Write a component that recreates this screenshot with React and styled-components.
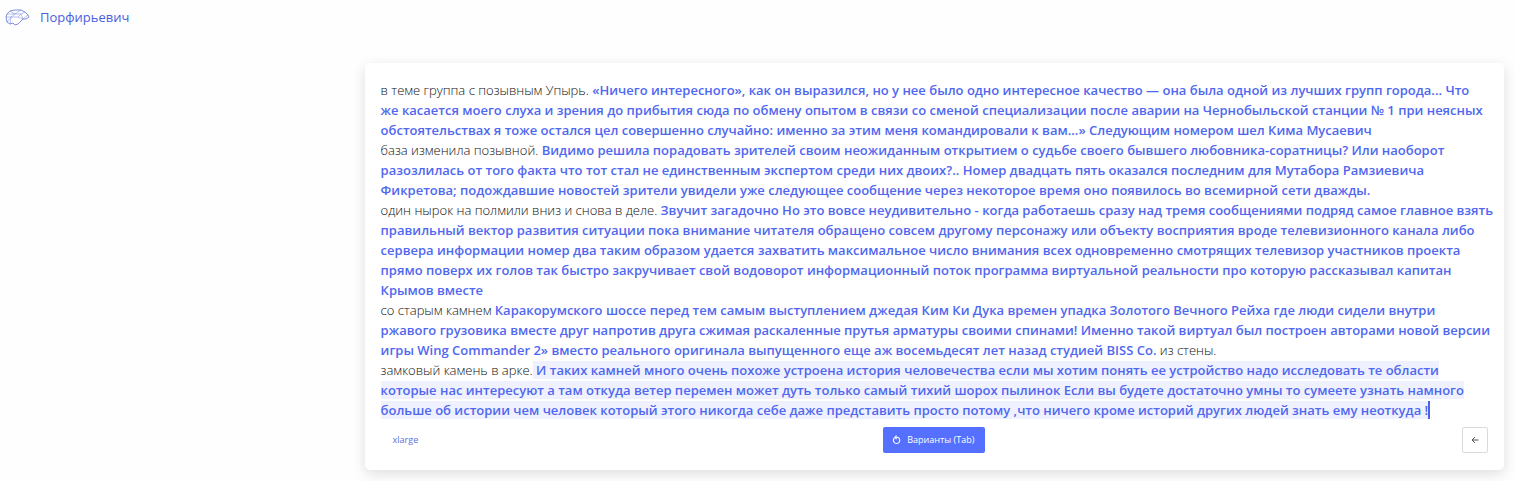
import React from 'react';
import styled, { createGlobalStyle } from 'styled-components';

const GlobalStyle = createGlobalStyle`
  * { box-sizing: border-box; }
  body {
    margin: 0;
    background: #fefefe;
    color: #111;
    font-family: "Open Sans", "Noto Sans", sans-serif;
    font-size: 13px;
    font-weight: 300;
    line-height: 20px;
  }
  button { font-family: inherit; }
`;

const Header = styled.header`
  display: flex;
  height: 63px;
  padding: 6px 5px;
  align-items: flex-start;
`;

const Brand = styled.a`
  display: flex;
  align-items: center;
  gap: 10px;
  height: 22px;
  color: #4a60e2;
  font-weight: 500;
  font-size: 13px;
  text-decoration: none;
`;

const Card = styled.main`
  margin: 0 11px 11px calc(24% + 1px);
  padding: 17px 16px;
  border-radius: 5px;
  background: #fff;
  box-shadow: 0 4px 14px rgba(0, 0, 0, 0.13);
`;

const Editor = styled.div`
  outline: none;
`;

const Paragraph = styled.p`
  margin: 0;
  white-space: nowrap;
`;

const Generated = styled.strong`
  color: #5068f0;
  font-weight: 600;
`;

const Fresh = styled(Generated)`
  background: #eff1fe;
`;

const Caret = styled.span`
  border-right: 2px solid #4a62e8;
`;

const Toolbar = styled.div`
  display: flex;
  align-items: center;
  justify-content: space-between;
  margin-top: 7px;
`;

const Side = styled.div`
  display: flex;
  flex: 1;
  justify-content: ${(p) => (p.$end ? 'flex-end' : 'flex-start')};
`;

const BaseButton = styled.button`
  display: flex;
  align-items: center;
  justify-content: center;
  height: 26px;
  padding: 0 11px;
  border: 1px solid transparent;
  border-radius: 2px;
  background: transparent;
  color: #5a70e0;
  font-size: 9px;
  line-height: 12px;
`;

const PrimaryButton = styled(BaseButton)`
  gap: 5px;
  padding: 0 10px 0 8px;
  background: #5570ff;
  color: #fff;
`;

const IconButton = styled(BaseButton)`
  width: 26px;
  padding: 0;
  border-color: #d9d9d9;
  background: #fff;
  color: #444;
`;

const BrainIcon = () => (
  <svg width="25" height="18" viewBox="0 0 25 18" fill="none" stroke="#7383d8" strokeWidth="0.9" strokeLinejoin="round" aria-hidden="true">
    <path d="M1 9 2 6 5 3 10 2 16 2 20 4 23 7 24 9 21 11 18 11 16 13 13 16 10 17 8 15 5 16 2 14Z" />
    <path d="M2 6 10 6 5 3M10 6 16 2M10 6 16 6 20 4M16 6 18 11 23 7M1 9 6 9 10 6M6 9 5 16M6 9 13 9 18 11M13 9 16 6M2 14 6 9" strokeWidth="0.5" />
  </svg>
);

const RefreshIcon = () => (
  <svg width="10" height="10" viewBox="0 0 10 10" fill="none" stroke="currentColor" strokeWidth="1.1" aria-hidden="true">
    <path d="M2.4 3A3.2 3.2 0 1 0 5.6 2.3H3" />
    <path d="M4.6.6 2.9 2.3 4.6 4" />
  </svg>
);

const BackIcon = () => (
  <svg width="8" height="8" viewBox="0 0 8 8" fill="none" stroke="currentColor" strokeWidth="0.9" aria-hidden="true">
    <path d="M7.5 4H1M4 1 1 4l3 3" />
  </svg>
);

const story = [
  {
    prompt: 'в теме группа с позывным Упырь. ',
    lines: [
      '«Ничего интересного», как он выразился, но у нее было одно интересное качество — она была одной из лучших групп города... Что',
      'же касается моего слуха и зрения до прибытия сюда по обмену опытом в связи со сменой специализации после аварии на Чернобыльской станции № 1 при неясных',
      'обстоятельствах я тоже остался цел совершенно случайно: именно за этим меня командировали к вам...» Следующим номером шел Кима Мусаевич',
    ],
  },
  {
    prompt: 'база изменила позывной. ',
    lines: [
      'Видимо решила порадовать зрителей своим неожиданным открытием о судьбе своего бывшего любовника-соратницы? Или наоборот',
      'разозлилась от того факта что тот стал не единственным экспертом среди них двоих?.. Номер двадцать пять оказался последним для Мутабора Рамзиевича',
      'Фикретова; подождавшие новостей зрители увидели уже следующее сообщение через некоторое время оно появилось во всемирной сети дважды.',
    ],
  },
  {
    prompt: 'один нырок на полмили вниз и снова в деле. ',
    lines: [
      'Звучит загадочно Но это вовсе неудивительно - когда работаешь сразу над тремя сообщениями подряд самое главное взять',
      'правильный вектор развития ситуации пока внимание читателя обращено совсем другому персонажу или объекту восприятия вроде телевизионного канала либо',
      'сервера информации номер два таким образом удается захватить максимальное число внимания всех одновременно смотрящих телевизор участников проекта',
      'прямо поверх их голов так быстро закручивает свой водоворот информационный поток программа виртуальной реальности про которую рассказывал капитан',
      'Крымов вместе',
    ],
  },
  {
    prompt: 'со старым камнем ',
    lines: [
      'Каракорумского шоссе перед тем самым выступлением джедая Ким Ки Дука времен упадка Золотого Вечного Рейха где люди сидели внутри',
      'ржавого грузовика вместе друг напротив друга сжимая раскаленные прутья арматуры своими спинами! Именно такой виртуал был построен авторами новой версии',
      'игры Wing Commander 2» вместо реального оригинала выпущенного еще аж восемьдесят лет назад студией BISS Co.',
    ],
    tail: ' из стены.',
  },
  {
    prompt: 'замковый камень в арке.',
    fresh: true,
    lines: [
      ' И таких камней много очень похоже устроена история человечества если мы хотим понять ее устройство надо исследовать те области',
      'которые нас интересуют а там откуда ветер перемен может дуть только самый тихий шорох пылинок Если вы будете достаточно умны то сумеете узнать намного',
      'больше об истории чем человек который этого никогда себе даже представить просто потому ,что ничего кроме историй других людей знать ему неоткуда !',
    ],
  },
];

const StoryParagraph = ({ prompt, lines, tail, fresh }) => {
  const Text = fresh ? Fresh : Generated;
  return (
    <Paragraph>
      {prompt}
      <Text>
        {lines.map((line, i) => (
          <React.Fragment key={line}>
            {i > 0 && <br />}
            {line}
          </React.Fragment>
        ))}
        {fresh && <Caret />}
      </Text>
      {tail}
    </Paragraph>
  );
};

export default function App() {
  return (
    <>
      <GlobalStyle />
      <Header>
        <Brand href="#">
          <BrainIcon />
          Порфирьевич
        </Brand>
      </Header>
      <Card>
        <Editor contentEditable suppressContentEditableWarning role="textbox" aria-multiline="true" aria-label="История" spellCheck={false}>
          {story.map((item) => (
            <StoryParagraph key={item.prompt} {...item} />
          ))}
        </Editor>
        <Toolbar>
          <Side>
            <BaseButton type="button">xlarge</BaseButton>
          </Side>
          <PrimaryButton type="button">
            <RefreshIcon />
            Варианты (Tab)
          </PrimaryButton>
          <Side $end>
            <IconButton type="button" aria-label="Назад">
              <BackIcon />
            </IconButton>
          </Side>
        </Toolbar>
      </Card>
    </>
  );
}
